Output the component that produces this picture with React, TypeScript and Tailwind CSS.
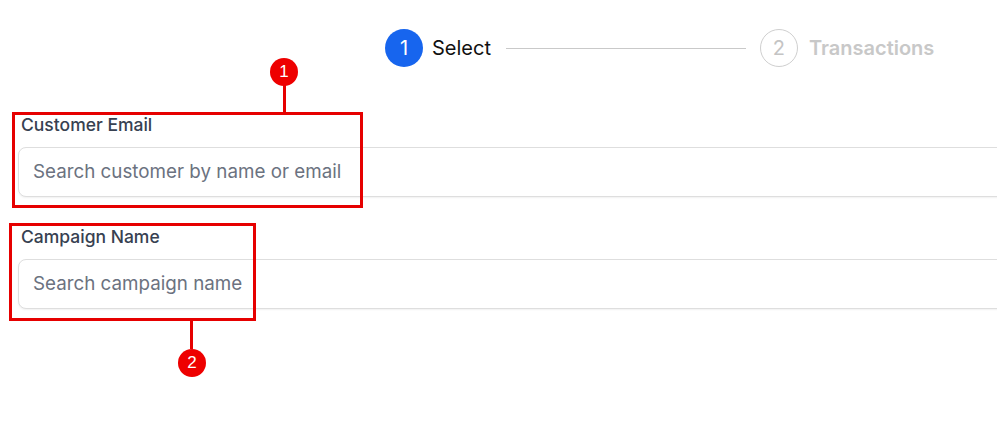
// App.tsx
// Stepper + search fields with red annotation callouts

function Field({ label, placeholder }: { label: string; placeholder: string }) {
  return (
    <div className="flex flex-col">
      <label className="text-[17.5px] leading-5 font-medium text-[#374151] pl-[3px] mb-3">{label}</label>
      <input
        type="text"
        placeholder={placeholder}
        className="w-[1000px] h-[50px] rounded-lg border border-[#dedede] bg-white pl-[14px] pb-[2px] text-[18.8px] text-gray-900 placeholder:text-[#6b7280] shadow-[0_1px_2px_rgba(0,0,0,0.06)] outline-none"
      />
    </div>
  );
}

function Callout({ n }: { n: number }) {
  return (
    <div className="w-7 h-7 rounded-full bg-[#ee0000] text-white text-[17px] flex items-center justify-center font-['Liberation_Sans',sans-serif]">
      {n}
    </div>
  );
}

export default function App() {
  return (
    <div className="relative w-[997px] h-[429px] overflow-hidden bg-white font-['Inter',sans-serif]">

      {/* Stepper */}
      <div className="flex items-center pt-[29px] pl-[385px]">
        <div className="w-[38px] h-[38px] rounded-full bg-[#1765ee] text-white text-[20px] flex items-center justify-center">1</div>
        <span className="ml-[9px] text-[20px] text-[#111111]">Select</span>
        <div className="ml-[15px] w-[240px] h-px bg-[#c9c9c9]" />
        <div className="ml-[14px] w-[38px] h-[38px] rounded-full border border-[#cfcfcf] text-[#c4c4c4] text-[20px] flex items-center justify-center">2</div>
        <span className="ml-[11px] text-[20px] font-semibold text-[#c8c8c8]">Transactions</span>
      </div>

      {/* Form */}
      <div className="flex flex-col gap-[30px] pl-[18px] mt-[48px]">
        <Field label="Customer Email" placeholder="Search customer by name or email" />
        <Field label="Campaign Name" placeholder="Search campaign name" />
      </div>

      {/* Annotation 1 */}
      <div className="absolute left-[12px] top-[112px] w-[351px] h-[96px] border-[3px] border-[#e60000] pointer-events-none" />
      <div className="absolute left-[283px] top-[84px] w-[3px] h-[28px] bg-[#e60000]" />
      <div className="absolute left-[270px] top-[58px]">
        <Callout n={1} />
      </div>

      {/* Annotation 2 */}
      <div className="absolute left-[9px] top-[223px] w-[247px] h-[98px] border-[3px] border-[#e60000] pointer-events-none" />
      <div className="absolute left-[190px] top-[321px] w-[3px] h-[28px] bg-[#e60000]" />
      <div className="absolute left-[178px] top-[349px]">
        <Callout n={2} />
      </div>
    </div>
  );
}
